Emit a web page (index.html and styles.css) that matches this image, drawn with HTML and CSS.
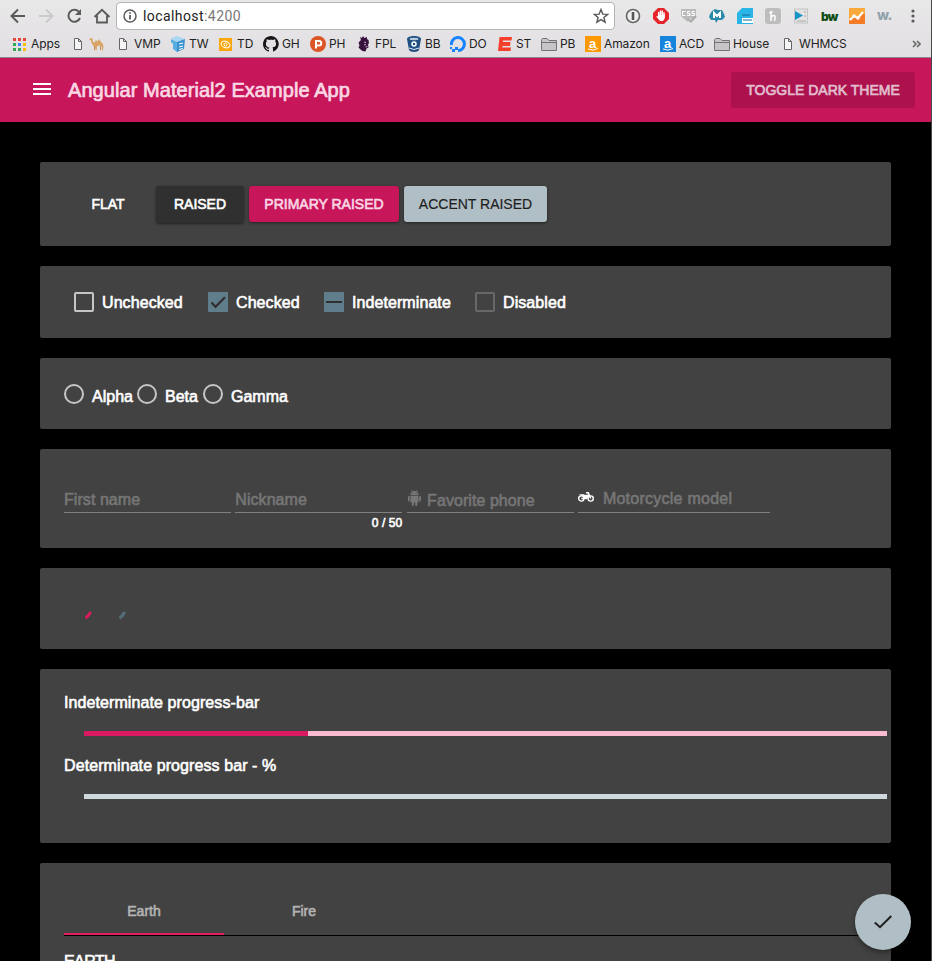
FILE: index.html
```html
<!DOCTYPE html>
<html lang="en">
<head>
<meta charset="utf-8">
<title>Angular Material2 Example App</title>
<link rel="stylesheet" href="styles.css">
</head>
<body>
<div class="window">
  <header class="browser">
    <div class="nav-row">
      <svg class="nav-icons" width="116" height="32" fill="none" stroke="#5a5a5a" stroke-width="2">
        <path d="M25 16H12M18 9.5L11.5 16L18 22.5"/>
        <path stroke="#cbcacb" d="M39 16h13M46 9.5L52.500 16L46 22.500"/>
        <path d="M79.500 12.500A6 6 0 1 0 80 18"/><path fill="#5a5a5a" stroke="none" d="M81 9v6h-6z"/>
        <path d="M94.500 17L102 9.800L109.500 17M97 15.500V22.500H107V15.500" stroke-width="1.800"/>
      </svg>
      <div class="address">
        <svg width="14" height="14" fill="none" stroke="#5a5a5a" stroke-width="1.500"><circle cx="7" cy="7" r="6"/><path d="M7 6v4.500M7 3.300v1.500" stroke-width="1.800"/></svg>
        <span class="url">localhost<i>:4200</i></span>
        <svg class="star" width="16" height="16" fill="none" stroke="#5a5a5a" stroke-width="1.400"><path d="M8 1.500L9.800 6.100L14.600 6.400L10.900 9.500L12.100 14.200L8 11.600L3.900 14.200L5.100 9.500L1.400 6.400L6.200 6.100Z"/></svg>
      </div>
      <div class="extensions">
        <svg viewBox="0 0 16 16"><circle cx="8" cy="8" r="6.500" fill="#eee" stroke="#666" stroke-width="1.600"/><path d="M8 4v8" stroke="#555" stroke-width="2.600"/></svg>
        <svg viewBox="0 0 16 16"><path fill="#e4252c" d="M5 0h6l5 5v6l-5 5H5L0 11V5z"/><path fill="none" stroke="#fff" stroke-width="1.500" stroke-linecap="round" d="M5.700 9V4.500M7.500 8V3M9.300 8V3.200M11 9V5"/><path fill="#fff" d="M5 7h6.700v3.500L10 13H7L3.200 8.500l1-.6L5.500 9z"/></svg>
        <svg viewBox="0 0 16 16"><path fill="#bbb" d="M0 1h15v8l-3 3-3-2-2 4-5-4-2-2z"/><path fill="none" stroke="#fff" stroke-width="1" d="M4.500 3.500h-3v4h3M9 3.500H6.500v2H9v2H6M13.500 3.500H11v2h2.500v2h-3"/><path fill="none" stroke="#aaa" stroke-width="2" d="M7 11l3 2.500L15 8"/></svg>
        <svg viewBox="0 0 16 16"><path fill="#2c8ba8" d="M3 3l3-2 3 1 4 0 2 4 1 3-3 3H9l-2 3-1-3H2L0 9l1-3z"/><path fill="none" stroke="#fff" stroke-width="2" d="M5 10V5l3 3 3-3v5"/></svg>
        <svg viewBox="0 0 16 16"><path fill="#29b5e5" d="M5 0h11v16H0V5z"/><path fill="#fff" d="M5 10h11v5H5z"/><path stroke="#126b99" stroke-width="1" d="M5 7h8M6 12h9"/></svg>
        <svg viewBox="0 0 16 16"><rect width="16" height="16" rx="3" fill="#bdbdbd"/><path fill="none" stroke="#fff" stroke-width="1.500" d="M6 3v10M4.500 5l3-1.500M6 9.500c2-3 4.500-2.500 4 .5l-.5 3"/></svg>
        <svg viewBox="0 0 16 16"><rect x="1.500" y="1" width="13" height="14" fill="#e2e2e2" stroke="#c4c4c4"/><path fill="#1595c5" d="M2 3l8 4.500L2 12z"/><path stroke="#aaa" d="M11 4h2M11 8h2M4 13h9"/></svg>
        <svg viewBox="0 0 16 16"><text class="bw" x="0" y="12.500">bw</text></svg>
        <svg viewBox="0 0 16 16"><rect width="16" height="16" fill="#f57c27"/><path fill="#faa93b" d="M0 0h16v6L12 6 9 10 5 8 0 13z"/><path fill="none" stroke="#fff" stroke-width="2" d="M1 12l4-4 4 2 5-6"/><g fill="#fff"><circle cx="5" cy="8" r="1.700"/><circle cx="9" cy="10" r="1.700"/></g></svg>
        <svg viewBox="0 0 16 16"><text class="wd" x="0" y="11.500">w.</text></svg>
        <svg viewBox="0 0 16 16" fill="#5a5a5a"><circle cx="8" cy="3" r="1.600"/><circle cx="8" cy="8" r="1.600"/><circle cx="8" cy="13" r="1.600"/></svg>
      </div>
    </div>
    <nav class="bookmarks">
      <a><svg width="13" height="13"><path fill="#e94335" d="M0 0h3v3H0zM5 0h3v3H5zM10 0h3v3h-3z"/><path fill="#34a853" d="M0 5h3v3H0zM0 10h3v3H0zM5 10h3v3H5z"/><path fill="#4285f4" d="M5 5h3v3H5z"/><path fill="#fbbc05" d="M10 5h3v3h-3zM10 10h3v3h-3z"/></svg><span>Apps</span></a>
      <a class="page"><svg width="8" height="12" fill="#f5f5f5" stroke="#666"><path d="M.5.500h4l3 3v8h-7zM4.500.500v3h3"/></svg><svg class="camel" width="15" height="14"><path fill="#d9a566" d="M0 3l1.500-2 2 .5.5 3.500 1.500.5L7 3l1.500 1.500L10 2l2 3 2 2 .5 3-.8 3.500h-1L13 10l-2-1.500-3 .5-.3 4.500h-1L6 9.500 4 8.500 2.500 6 2 3.500z"/><path stroke="#b7762f" stroke-width=".8" d="M5.500 9v4M11.500 9v4" fill="none"/></svg></a>
      <a class="page"><svg width="8" height="12" fill="#f5f5f5" stroke="#666"><path d="M.5.500h4l3 3v8h-7zM4.500.500v3h3"/></svg><span>VMP</span></a>
      <a><svg width="16" height="16"><path fill="#a9d7f2" d="M1 2l6-2 8 3-8 3z"/><path fill="#5aaee0" d="M1 3l6 3v10l-4-3V8L1 6z"/><path fill="#3a91cf" d="M7 6l8-3-1 10-7 3z"/><path stroke="#fff" d="M9 8l4-1M9 11l4-1M9 13.500l4-1"/></svg><span>TW</span></a>
      <a><svg width="13" height="13"><rect width="13" height="13" fill="#f9a70d"/><g fill="none" stroke="#fff"><ellipse cx="6.500" cy="6.500" rx="4.500" ry="3.200" transform="rotate(20 6.500 6.500)"/><circle cx="6.500" cy="6.500" r="1.500"/></g></svg><span>TD</span></a>
      <a><svg width="16" height="16"><path fill="#171515" d="M8 0C3.600 0 0 3.600 0 8c0 3.500 2.300 6.500 5.500 7.600.4.100.5-.2.500-.4v-1.400c-2.200.5-2.700-1-2.700-1-.4-.9-.9-1.200-.9-1.200-.7-.5.100-.5.100-.5.800.1 1.200.8 1.200.8.700 1.300 1.900.9 2.300.7.100-.5.300-.9.500-1.100-1.800-.2-3.600-.9-3.600-4 0-.9.300-1.600.8-2.100-.1-.2-.4-1 .1-2.100 0 0 .7-.2 2.200.8.600-.2 1.300-.3 2-.3s1.400.1 2 .3c1.500-1 2.200-.8 2.200-.8.400 1.100.2 1.900.1 2.100.5.600.8 1.300.8 2.100 0 3.100-1.900 3.700-3.700 3.900.3.300.6.800.6 1.500v2.200c0 .2.100.5.500.4A8 8 0 0 0 8 0"/></svg><span>GH</span></a>
      <a><svg width="16" height="16"><circle cx="8" cy="8" r="8" fill="#dc5526"/><path fill="none" stroke="#fff" stroke-width="2" d="M6 12.500V5h3a2 2 0 0 1 0 4.500H6"/></svg><span>PH</span></a>
      <a><svg width="16" height="16"><path fill="#38123c" d="M5 4L4 1l2 1 1-2 1.500 2L11 1v2l1.500 1 .5 3-1 1.500.5 3-2 1-1 3-3-.5-2-1.500-2-2 1-2-1-3z"/><path stroke="#dbcfe0" stroke-width=".8" d="M8 6l2 .6M8 9l2-.6M9.500 11l2-.6"/></svg><span>FPL</span></a>
      <a><svg width="16" height="16"><path fill="#205081" d="M1 3c0-4 14-4 14 0l-2 11c-1 2.500-9 2.500-10 0z"/><ellipse cx="8" cy="3" rx="4.500" ry="1.200" fill="#b8c9dc"/><circle cx="8" cy="8" r="2" fill="none" stroke="#fff" stroke-width="1.500"/><path d="M3 12q5 3 10 0" stroke="#dfe7f0" fill="none"/></svg><span>BB</span></a>
      <a><svg width="16" height="16"><path fill="none" stroke="#1683ff" stroke-width="3" d="M1.500 9A6.500 6.500 0 1 1 8 14.500"/><path fill="#1683ff" d="M5 11h3v3H5zM2 13h3v3H2zM0 11h2v2H0z"/></svg><span>DO</span></a>
      <a><svg width="15" height="14"><path fill="#f5402c" d="M1.500 0H14l-.5 3.500H5L4.800 5H12.500L12 9H4.500l-.2 1.500H13l-.5 3.500H0z"/></svg><span>ST</span></a>
      <a><svg width="16" height="13"><path fill="#c6c4c7" stroke="#737373" d="M.5 11.500V1.500L1.500.500H6L8 2.500h7.500v10H.5zM.5 4.500h15"/></svg><span>PB</span></a>
      <a><svg width="16" height="16"><rect width="16" height="16" fill="#ff9900"/><text class="letter" x="4" y="11.500">a</text><path fill="none" stroke="#fff" stroke-width="1" d="M3 13q5 2.500 10-.5"/></svg><span>Amazon</span></a>
      <a><svg width="16" height="16"><rect width="16" height="16" fill="#1683dc"/><text class="letter" x="4" y="11.500">a</text><path fill="none" stroke="#fff" stroke-width="1" d="M3 13q5 2.500 10-.5"/></svg><span>ACD</span></a>
      <a><svg width="16" height="13"><path fill="#c6c4c7" stroke="#737373" d="M.5 11.500V1.500L1.500.500H6L8 2.500h7.500v10H.5zM.5 4.500h15"/></svg><span>House</span></a>
      <a class="page"><svg width="8" height="12" fill="#f5f5f5" stroke="#666"><path d="M.5.500h4l3 3v8h-7zM4.500.500v3h3"/></svg><span>WHMCS</span></a>
      <a><svg width="9" height="8" fill="none" stroke="#666" stroke-width="1.600"><path d="M1 1l3 3-3 3M5 1l3 3-3 3"/></svg></a>
    </nav>
  </header>

  <div class="toolbar">
    <div class="burger"></div>
    <h1>Angular Material2 Example App</h1>
    <button class="toggle"><span>TOGGLE DARK THEME</span></button>
  </div>

  <main>
    <section class="card buttons">
      <button class="flat"><span>FLAT</span></button>
      <button class="raised"><span>RAISED</span></button>
      <button class="primary"><span>PRIMARY RAISED</span></button>
      <button class="accent"><span>ACCENT RAISED</span></button>
    </section>
    <section class="card checks">
      <label><i class="box"></i><span>Unchecked</span></label>
      <label><svg width="20" height="20"><rect width="20" height="20" rx="1" fill="#607d8b"/><path d="M3.500 10.500L7.500 14.800L17 5.300" fill="none" stroke="#303030" stroke-width="2.200"/></svg><span>Checked</span></label>
      <label><svg width="20" height="20"><rect width="20" height="20" rx="1" fill="#607d8b"/><path d="M2 10h16" stroke="#303030" stroke-width="2"/></svg><span>Indeterminate</span></label>
      <label><i class="box off"></i><span>Disabled</span></label>
    </section>
    <section class="card radios">
      <label><i></i><span>Alpha</span></label>
      <label><i></i><span>Beta</span></label>
      <label><i></i><span>Gamma</span></label>
    </section>
    <section class="card inputs">
      <div class="field"><div class="line"><span>First name</span></div></div>
      <div class="field"><div class="line"><span>Nickname</span></div><small>0 / 50</small></div>
      <div class="field"><div class="line phone"><svg width="15" height="16" viewBox="0 0 15 16" fill="#777"><path d="M3.500 5a4 4 0 0 1 8 0z"/><path d="M4.500 0l1.500 2M10.500 0L9 2" stroke="#777" stroke-width=".8"/><path d="M3.500 5.700h8v6.800h-8z"/><rect x="1" y="6" width="1.800" height="5.500" rx=".9"/><rect x="12.200" y="6" width="1.800" height="5.500" rx=".9"/><rect x="4.800" y="11" width="2" height="5" rx="1"/><rect x="8.200" y="11" width="2" height="5" rx="1"/><circle cx="5.800" cy="3.200" r=".5" fill="#424242"/><circle cx="9.200" cy="3.200" r=".5" fill="#424242"/></svg><span>Favorite phone</span></div></div>
      <div class="field"><div class="line moto"><svg width="16" height="10" viewBox="0 0 16 10" fill="none" stroke="#fff"><circle cx="3.300" cy="6.500" r="2.600" stroke-width="1.400"/><circle cx="12.700" cy="6.500" r="2.600" stroke-width="1.400"/><path stroke-width="1.500" d="M8 .8h2.300L12.700 6.500M3.300 6.500h5L11 3.200"/><path fill="#fff" stroke="none" d="M1.500 2.200H6l1 .8 4-.8L9 6.800H6.500L5 4 1.500 3.200z"/></svg><span>Motorcycle model</span></div></div>
    </section>
    <section class="card spinners">
      <svg width="46" height="14" fill="none" stroke-width="3.200"><path stroke="#d81b60" d="M2.500 10Q6 8 7.500 4"/><path stroke="#546e7a" d="M36.500 10Q40 8 41.500 4"/></svg>
    </section>
    <section class="card progress">
      <p>Indeterminate progress-bar</p>
      <div class="bar pink"><div></div></div>
      <p>Determinate progress bar - %</p>
      <div class="bar blue"></div>
    </section>
    <section class="card tabs">
      <div class="tab-row"><span class="tab active">Earth</span><span class="tab">Fire</span></div>
      <h2>EARTH</h2>
    </section>
  </main>
  <button class="fab"><svg width="24" height="24" fill="none" stroke="#202020" stroke-width="2"><path d="M3.800 12.500L9 17.200L20.300 6"/></svg></button>
</div>
</body>
</html>
```
FILE: styles.css
```css
* { box-sizing: border-box; }
body { margin: 0; background: #000; font: 16px/20px "Liberation Sans", Arial, sans-serif; color: #fff; }
.window { position: relative; width: 932px; height: 961px; overflow: hidden; border-right: 1px solid #47494a; }
svg { display: block; flex: none; }
button { border: 0; padding: 0; font: inherit; color: inherit; }

.browser { height: 58px; background: linear-gradient(#e9e8e9, #e2dfe2); border-bottom: 1px solid #8b898b; color: #222; }
.nav-row { display: flex; height: 32px; }
.address { display: flex; align-items: center; width: 499px; height: 28px; margin-top: 2px; padding: 0 5px 0 6px; background: #fff; border: 1px solid #b5b3b5; border-radius: 4px; }
.url { margin-left: 6px; font: 14px/20px Roboto, sans-serif; letter-spacing: .42px; color: #222; }
.url i { font-style: normal; color: #777; }
.star { margin-left: auto; }
.extensions { display: flex; gap: 12px; padding: 8px 0 0 10px; }
.extensions svg { width: 16px; height: 16px; overflow: visible; }
.bw { font: 900 12px Inter, sans-serif; letter-spacing: -1px; fill: #104d16; }
.wd { font: 800 14px Inter, sans-serif; letter-spacing: -.5px; fill: #90a2ab; }
.bookmarks { display: grid; grid-template-columns: 61px 45px 51px 49px 44px 47px 46px 50px 44px 48px 43px 44px 75px 54px 70px 128px 12px; height: 24px; padding-left: 13px; align-items: center; }
.bookmarks a { display: flex; align-items: center; height: 16px; font: 12px/16px Inter, sans-serif; letter-spacing: -.1px; white-space: nowrap; }
.bookmarks span { margin: -1px 0 0 3px; }
.bookmarks a:first-child span, .bookmarks a:nth-child(5) span { margin-left: 5px; }
.bookmarks .page span, .bookmarks .camel { margin-left: 7px; }
.letter { font: bold 13px "Liberation Sans", sans-serif; fill: #fff; }

.toolbar { display: flex; align-items: center; height: 64px; padding: 0 16px 0 33px; background: #c8165b; }
.burger { width: 18px; height: 12px; margin-top: -2px; border-top: 2px solid #fff; border-bottom: 2px solid #fff; background: linear-gradient(#fff, #fff) 0 3px / 18px 2px no-repeat; }
h1 { margin: 0 0 0 17px; font-size: 20px; line-height: 24px; font-weight: normal; letter-spacing: .06px; color: #f9d8e4; -webkit-text-stroke: .7px; }
.toggle { width: 184px; height: 36px; margin-left: auto; border-radius: 3px; background: #ad124f; color: #e2bdcc; font-size: 14px; -webkit-text-stroke: .7px; }

main { display: flex; flex-direction: column; gap: 20px; padding: 40px 40px 0; }
.card { flex: none; background: #424242; border-radius: 2px; }
.card span, .card p, .card h2, small { -webkit-text-stroke: .6px; }

.buttons { display: flex; height: 84px; padding: 24px; }
.buttons button { height: 36px; border-radius: 3px; font-size: 14px; }
.buttons .flat { width: 88px; background: none; }
.buttons .raised { width: 88px; height: 37px; margin-left: 4px; padding-bottom: 2px; background: #303030; }
.buttons .primary { width: 150px; margin-left: 5px; background: #c8165b; color: #f9d8e4; }
.buttons .accent { width: 143px; margin-left: 5px; background: #b0bec5; color: #202020; }
.buttons .accent span { -webkit-text-stroke: .15px; }
.raised, .primary, .accent { box-shadow: 0 1px 3px rgba(0,0,0,.5); }

.checks { display: grid; grid-template-columns: 134px 116px 151px 120px; height: 72px; padding: 26px 34px; }
.checks label { display: flex; height: 20px; gap: 8px; }
.checks span { margin-top: 1px; letter-spacing: .08px; }
.box { width: 20px; height: 20px; border: 2px solid #c6c6c6; border-radius: 2px; }
.box.off { border-color: #686868; }

.radios { display: grid; grid-template-columns: 73px 66px 100px; height: 71px; padding: 26px 24px; }
.radios label { display: flex; gap: 8px; }
.radios i { width: 20px; height: 20px; border: 2px solid #c6c6c6; border-radius: 50%; }
.radios span { margin-top: 3px; }

.inputs { display: grid; grid-template-columns: 167px 167px 167px 192px; column-gap: 4.300px; height: 99px; padding: 40px 24px 0; }
.line { display: flex; height: 24px; border-bottom: 1px solid #808080; color: #767676; white-space: nowrap; }
.line span { margin-top: 1px; letter-spacing: .06px; }
.phone span { margin: 2px 0 0 5.500px; }
.phone svg { margin-top: 1px; }
.moto span { margin: 0 0 0 9px; letter-spacing: .25px; }
.moto svg { margin-top: 3px; }
small { display: block; font-size: 12px; line-height: 20px; text-align: right; letter-spacing: .1px; }

.spinners { height: 81px; padding: 40px 43px; }

.progress { height: 174px; padding: 24px 4px 0 24px; }
.progress p { margin: 0; height: 20px; letter-spacing: .09px; }
.bar { height: 5px; margin: 18px 0 20px 20px; }
.pink { background: #f8bbd0; }
.pink div { width: 224px; height: 5px; background: #d81b60; }
.blue { background: #cfd8dc; }

.tabs { height: 200px; padding: 24px 24px 0; }
.tab-row { display: flex; height: 49px; border-bottom: 1px solid #000; }
.tab { width: 160px; height: 48px; font-size: 14px; line-height: 48px; text-align: center; color: #b3b3b3; }
.tab.active { border-bottom: 2px solid #e51c60; }
h2 { margin: 16px 0 0; font-size: 16px; line-height: 20px; font-weight: normal; letter-spacing: -.6px; }

.fab { position: absolute; left: 855px; top: 894px; width: 56px; height: 56px; display: flex; align-items: center; justify-content: center; border-radius: 50%; background: #b0bec5; box-shadow: 0 3px 5px rgba(0,0,0,.35); }
```
